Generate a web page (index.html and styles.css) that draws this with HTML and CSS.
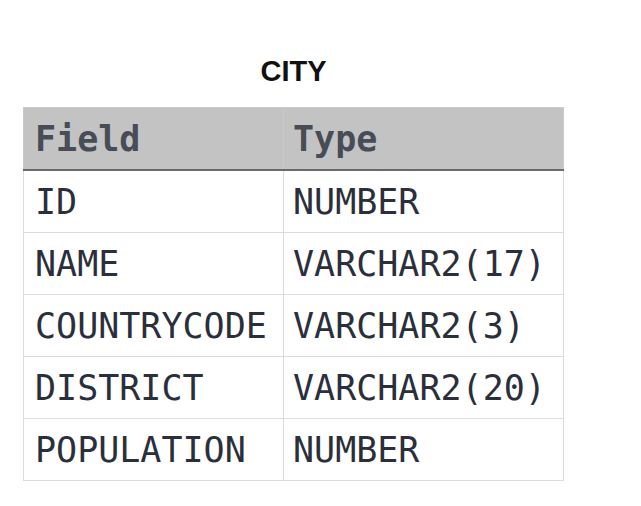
FILE: index.html
```html
<!DOCTYPE html>
<html>
<head>
<meta charset="utf-8">
<link rel="stylesheet" href="styles.css">
</head>
<body>
<div class="wrap">
  <h1 class="title">CITY</h1>
  <table class="schema">
    <thead>
      <tr><th class="c1">Field</th><th class="c2">Type</th></tr>
    </thead>
    <tbody>
      <tr><td>ID</td><td>NUMBER</td></tr>
      <tr><td>NAME</td><td>VARCHAR2(17)</td></tr>
      <tr><td>COUNTRYCODE</td><td>VARCHAR2(3)</td></tr>
      <tr><td>DISTRICT</td><td>VARCHAR2(20)</td></tr>
      <tr><td>POPULATION</td><td>NUMBER</td></tr>
    </tbody>
  </table>
</div>
</body>
</html>
```
FILE: styles.css
```css
html, body {
  margin: 0;
  padding: 0;
  background: #ffffff;
}
.wrap {
  width: 541px;
  padding: 54px 0 0 23px;
}
.title {
  margin: 0 0 18px 0;
  text-align: center;
  font-family: "Liberation Sans", Arial, sans-serif;
  font-weight: bold;
  font-size: 29px;
  line-height: 35px;
  color: #111111;
}
.schema {
  border-collapse: collapse;
  width: 541px;
  font-family: "DejaVu Sans Mono", monospace;
  font-size: 35px;
  color: #2b2f3b;
}
.schema th, .schema td {
  border: 1px solid #dcdcdc;
  text-align: left;
  padding: 0 0 0 11px;
  height: 61px;
  line-height: 40px;
  vertical-align: middle;
  white-space: nowrap;
}
.schema th {
  background: #c3c3c3;
  color: #474c57;
  font-weight: bold;
  border-color: #c9c9c9;
  border-bottom: 2px solid #6a6a6a;
}
.schema .c1 { width: 248px; }
.schema td + td, .schema th + th { padding-left: 9px; }
```
